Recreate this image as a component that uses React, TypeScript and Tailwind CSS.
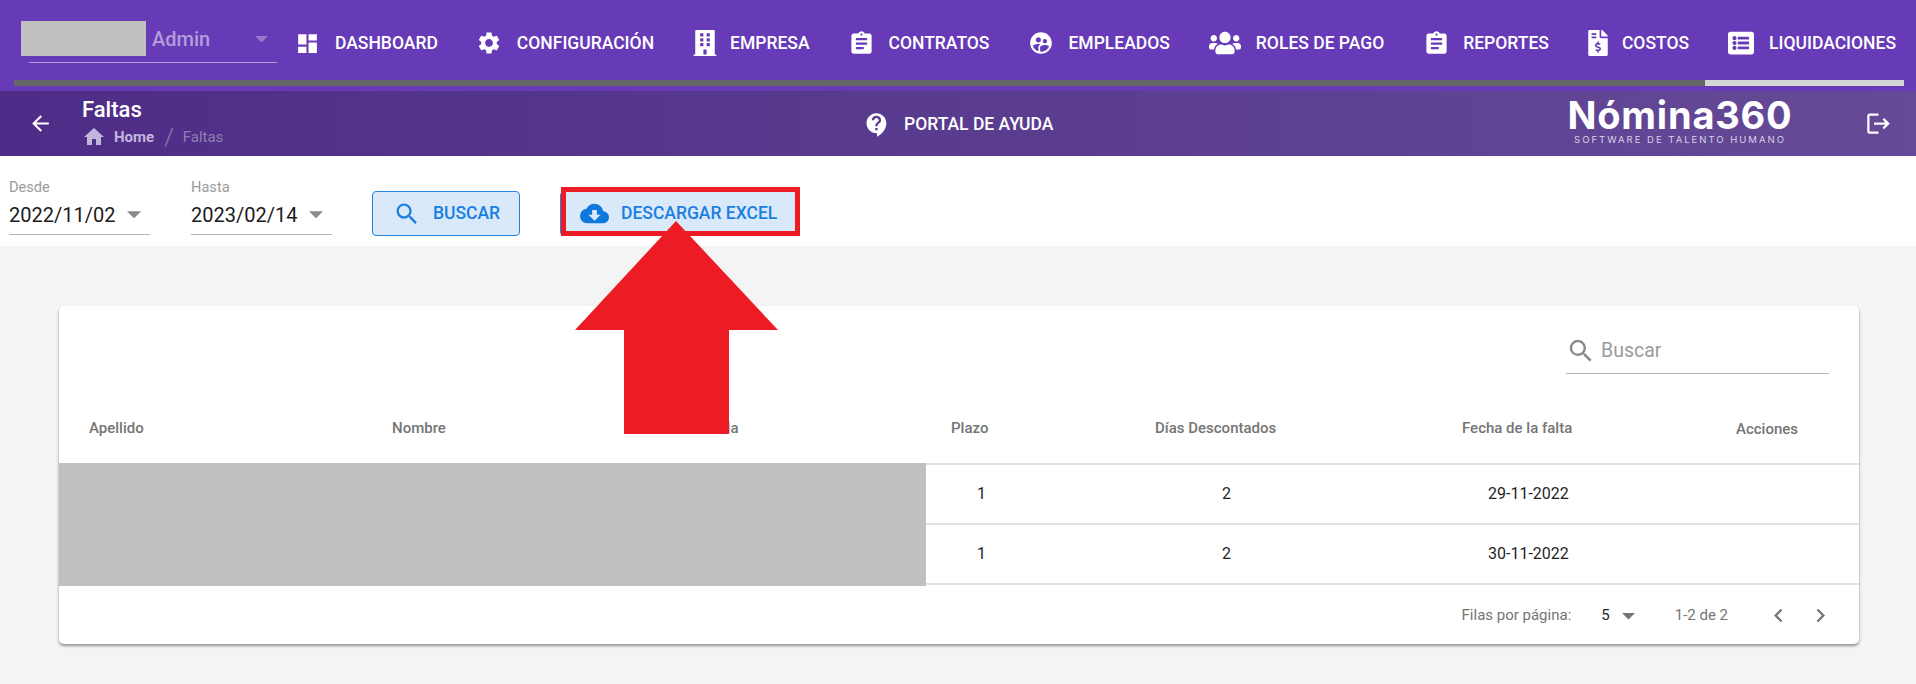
import type { ReactNode } from "react";
import {
  MdArrowBack,
  MdArrowDropDown,
  MdAssignment,
  MdChevronLeft,
  MdChevronRight,
  MdCloudDownload,
  MdContactSupport,
  MdDashboard,
  MdHome,
  MdLogout,
  MdSearch,
  MdSettings,
  MdSupervisedUserCircle,
} from "react-icons/md";
import { FaBuilding, FaFileInvoiceDollar, FaListAlt, FaUsers } from "react-icons/fa";

const Tab = ({ icon, label, boxClass, className }: { icon: ReactNode; label: string; boxClass: string; className: string }) => (
  <div className={`flex items-center shrink-0 ${className}`}>
    <span className={`flex justify-center shrink-0 ${boxClass}`}>{icon}</span>
    <span className="text-[17.5px] font-medium text-white whitespace-nowrap">{label}</span>
  </div>
);

const DateField = ({ label, value, className }: { label: string; value: string; className: string }) => (
  <div className={`pt-[22px] ${className}`}>
    <div className="text-[14.6px] leading-[18px] text-[#9b9b9b]">{label}</div>
    <div className="flex items-center h-[39px] border-b border-[#b5b5b5] text-[20px] text-[#1b1b1b]">
      <span>{value}</span>
      <MdArrowDropDown size={34} className="text-[#8a8a8a] ml-[2px] mt-[-3px] shrink-0" />
    </div>
  </div>
);

const rows = [
  { plazo: "1", dias: "2", fecha: "29-11-2022" },
  { plazo: "1", dias: "2", fecha: "30-11-2022" },
];

export default function App() {
  return (
    <div className="relative min-h-[684px] bg-[#f4f4f4] font-['Roboto',sans-serif]">
      {/* menu superior */}
      <div className="h-[91px] bg-[#673ab7]">
        <div className="flex items-center h-[80px] pt-[6px]">
          <div className="w-[277px] shrink-0 pl-[21px] self-start pt-[15px]">
            <div className="flex items-center h-[35px]">
              <div className="w-[125px] h-[35px] bg-[#c0c0c0] shrink-0" />
              <span className="ml-[6px] text-[20px] font-medium text-[#b39ddb]">Admin</span>
              <MdArrowDropDown size={31} className="ml-[36px] text-[#9379c6] shrink-0" />
            </div>
            <div className="ml-[8px] mt-[6px] h-px bg-[#b39ddb]" />
          </div>
          <Tab className="ml-[21px]" boxClass="w-[19px] mr-[18px]" label="DASHBOARD" icon={<MdDashboard size={25} className="text-white shrink-0" />} />
          <Tab className="ml-[41px]" boxClass="w-[21px] mr-[17px]" label="CONFIGURACIÓN" icon={<MdSettings size={26} className="text-white shrink-0" />} />
          <Tab className="ml-[39px]" boxClass="w-[23px] mr-[14px]" label="EMPRESA" icon={<FaBuilding size={26} className="text-white shrink-0" />} />
          <Tab className="ml-[42px]" boxClass="w-[20px] mr-[17px]" label="CONTRATOS" icon={<MdAssignment size={27} className="text-white shrink-0" />} />
          <Tab className="ml-[41px]" boxClass="w-[22px] mr-[16px]" label="EMPLEADOS" icon={<MdSupervisedUserCircle size={26} className="text-white shrink-0" />} />
          <Tab className="ml-[39px]" boxClass="w-[32px] mr-[15px]" label="ROLES DE PAGO" icon={<FaUsers size={32} className="text-white shrink-0" />} />
          <Tab className="ml-[42px]" boxClass="w-[20px] mr-[17px]" label="REPORTES" icon={<MdAssignment size={27} className="text-white shrink-0" />} />
          <Tab className="ml-[39px]" boxClass="w-[20px] mr-[14px]" label="COSTOS" icon={<FaFileInvoiceDollar size={26} className="text-white shrink-0" />} />
          <Tab className="ml-[39px]" boxClass="w-[26px] mr-[15px]" label="LIQUIDACIONES" icon={<FaListAlt size={26} className="text-white shrink-0" />} />
        </div>
        <div className="flex ml-[14px] mr-[12px] h-[6px] bg-[#666666] justify-end">
          <div className="w-[199px] bg-[#d6d6d6]" />
        </div>
      </div>

      {/* barra de titulo */}
      <div className="flex items-center h-[65px] bg-gradient-to-r from-[#4e2c87] to-[#654a97]">
        <div className="flex items-center w-[863px] shrink-0">
          <MdArrowBack size={25} className="ml-[28px] text-white shrink-0" />
          <div className="ml-[29px]">
            <div className="text-[22px] leading-[26px] mt-[-2px] font-medium text-white">Faltas</div>
            <div className="flex items-center h-[22px] mt-[3px] text-[15px]">
              <MdHome size={24} className="text-[#c3b6dd] shrink-0" />
              <span className="ml-[8px] font-bold text-[#c3b6dd]">Home</span>
              <span className="ml-[10px] text-[24px] leading-[22px] font-light text-[#8f7fb0]">/</span>
              <span className="ml-[9px] text-[#8f7fb0]">Faltas</span>
            </div>
          </div>
        </div>
        <div className="flex items-center w-[706px] shrink-0 pt-[2px]">
          <MdContactSupport size={28} className="text-white shrink-0" />
          <span className="ml-[13px] text-[17.5px] font-medium text-white">PORTAL DE AYUDA</span>
        </div>
        <div className="w-[222px] shrink-0 flex flex-col items-center pb-[7px]">
          <div className="text-[38px] leading-[40px] font-bold tracking-[0.8px] text-white font-['Inter',sans-serif]">Nómina360</div>
          <div className="text-[9.5px] leading-[10px] tracking-[2px] text-[#d9d2e8] font-['Inter',sans-serif] whitespace-nowrap">SOFTWARE DE TALENTO HUMANO</div>
        </div>
        <MdLogout size={27} className="ml-[74px] text-white shrink-0" />
      </div>

      {/* filtros */}
      <div className="relative flex items-start h-[90px] bg-white pl-[9px]">
        <DateField label="Desde" value="2022/11/02" className="w-[141px]" />
        <DateField label="Hasta" value="2023/02/14" className="w-[142px] ml-[40px] pl-px" />
        <button className="flex items-center w-[148px] h-[45px] mt-[35px] ml-[40px] rounded-[4px] border border-[#1f84e4] bg-[#d9e9fa] text-[#1a7fe0] text-[17.5px] font-medium">
          <MdSearch size={28} className="ml-[20px] shrink-0" />
          <span className="ml-[12px]">BUSCAR</span>
        </button>
        <div className="relative mt-[35px] ml-[40px]">
          <button className="flex items-center w-[238px] h-[45px] rounded-[4px] border border-[#1f84e4] bg-[#d9e9fa] text-[#1a7fe0] text-[17.5px] font-medium">
            <MdCloudDownload size={29} className="ml-[19px] text-[#0f78dc] shrink-0" />
            <span className="ml-[12px] whitespace-nowrap">DESCARGAR EXCEL</span>
          </button>
          <div className="absolute left-px top-[-4px] w-[239px] h-[49px] border-[5px] border-[#ed1c24]" />
        </div>
      </div>

      {/* tabla */}
      <div className="ml-[59px] mt-[60px] w-[1800px] rounded-[5px] bg-white shadow-[0_2px_3px_rgba(0,0,0,0.4)]">
        <div className="flex justify-end pt-[37px] pr-[30px]">
          <div className="flex items-center w-[263px] h-[31px] border-b border-[#b5b5b5] pb-[14px]">
            <MdSearch size={30} className="text-[#8a8a8a] shrink-0" />
            <span className="ml-[5px] text-[19.5px] text-[#9b9b9b]">Buscar</span>
          </div>
        </div>
        <div className="grid grid-cols-[303px_303px_261px_204px_307px_274px_148px] items-center h-[89px] pt-[20px] text-[15px] font-medium text-[#757575]">
          <div className="pl-[30px]">Apellido</div>
          <div className="pl-[30px]">Nombre</div>
          <div className="pl-[27px]">Cédula</div>
          <div className="pl-[25px]">Plazo</div>
          <div className="pl-[25px]">Días Descontados</div>
          <div className="pl-[25px]">Fecha de la falta</div>
          <div className="pl-[25px] pt-[2px]">Acciones</div>
        </div>
        <div className="flex">
          <div className="w-[867px] h-[123px] bg-[#c0c0c0] shrink-0" />
          <div className="flex-1 border-t-2 border-[#e2e2e2]">
            {rows.map((row) => (
              <div key={row.fecha} className="grid grid-cols-[204px_307px_274px_148px] items-center h-[60px] border-b-2 border-[#e2e2e2] text-[16px] text-[#1f1f1f]">
                <div className="pl-[51px]">{row.plazo}</div>
                <div className="pl-[92px]">{row.dias}</div>
                <div className="pl-[51px]">{row.fecha}</div>
                <div />
              </div>
            ))}
          </div>
        </div>
        <div className="flex items-center justify-end h-[58px] text-[15px] text-[#757575]">
          <span>Filas por página:</span>
          <span className="ml-[30px] text-[#1f1f1f]">5</span>
          <MdArrowDropDown size={31} className="text-[#757575] ml-[3px] shrink-0" />
          <span className="ml-[31px]">1-2 de 2</span>
          <MdChevronLeft size={27} className="ml-[37px] text-[#757575] shrink-0" />
          <MdChevronRight size={27} className="ml-[15px] mr-[25px] text-[#757575] shrink-0" />
        </div>
      </div>

      {/* flecha roja */}
      <svg className="absolute left-[575px] top-[221px]" width="203" height="213" viewBox="0 0 203 213">
        <polygon points="101,0 203,109 154,109 154,213 49,213 49,109 0,109" fill="#ed1c24" />
      </svg>
    </div>
  );
}
